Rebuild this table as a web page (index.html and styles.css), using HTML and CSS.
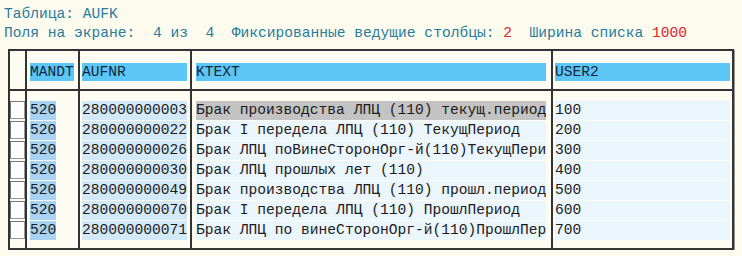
FILE: index.html
```html
<!DOCTYPE html>
<html lang="ru">
<head>
<meta charset="utf-8">
<title>AUFK</title>
<link rel="stylesheet" href="styles.css">
</head>
<body>
<div class="info">
  <div class="line">Таблица: AUFK</div>
  <div class="line">Поля на экране:  4 из  4  Фиксированные ведущие столбцы: <span class="red">2</span>  Ширина списка <span class="red">1000</span></div>
</div>
<div class="frame">
  <div class="col chk">
    <div class="head"></div>
    <div class="body">
      <div class="cb"></div><div class="cb"></div><div class="cb"></div><div class="cb"></div><div class="cb"></div><div class="cb"></div><div class="cb"></div>
    </div>
  </div>
  <div class="col mandt">
    <div class="head"><span class="band">MANDT</span></div>
    <div class="body">
      <div class="cell">520</div><div class="cell">520</div><div class="cell">520</div><div class="cell">520</div><div class="cell">520</div><div class="cell">520</div><div class="cell">520</div>
    </div>
  </div>
  <div class="col aufnr">
    <div class="head"><span class="band">AUFNR</span></div>
    <div class="body">
      <div class="cell">280000000003</div>
      <div class="cell">280000000022</div>
      <div class="cell">280000000026</div>
      <div class="cell">280000000030</div>
      <div class="cell">280000000049</div>
      <div class="cell">280000000070</div>
      <div class="cell">280000000071</div>
    </div>
  </div>
  <div class="col ktext">
    <div class="head"><span class="band">KTEXT</span></div>
    <div class="body">
      <div class="cell sel">Брак производства ЛПЦ (110) текущ.период</div>
      <div class="cell">Брак I передела ЛПЦ (110) ТекущПериод</div>
      <div class="cell">Брак ЛПЦ поВинеСторонОрг-й(110)ТекущПери</div>
      <div class="cell">Брак ЛПЦ прошлых лет (110)</div>
      <div class="cell">Брак производства ЛПЦ (110) прошл.период</div>
      <div class="cell">Брак I передела ЛПЦ (110) ПрошлПериод</div>
      <div class="cell">Брак ЛПЦ по винеСторонОрг-й(110)ПрошлПер</div>
    </div>
  </div>
  <div class="col user2">
    <div class="head"><span class="band">USER2</span></div>
    <div class="body">
      <div class="cell">100</div><div class="cell">200</div><div class="cell">300</div><div class="cell">400</div><div class="cell">500</div><div class="cell">600</div><div class="cell">700</div>
    </div>
  </div>
</div>
</body>
</html>
```

FILE: styles.css
```css
html, body {
  margin: 0;
  background: #fcfbee;
}
body {
  padding: 5px 4px 0 4px;
  font-family: "Liberation Mono", "DejaVu Sans Mono", monospace;
  font-size: 14.6px;
  color: #1c1c1c;
}
.info {
  color: #2a7c9c;
  line-height: 19px;
}
.line {
  white-space: pre;
  height: 19px;
}
.red {
  color: #e5222b;
}
.frame {
  margin: 6px 0 0 4px;
  width: 722px;
  display: flex;
  border: 2px solid #333;
  box-shadow: 1px 1px 0 #999;
  background: #fdfcf2;
}
.col {
  display: flex;
  flex-direction: column;
  border-left: 2px solid #333;
}
.col.chk {
  border-left: none;
  width: 15px;
}
.col.mandt { width: 51px; }
.col.aufnr { width: 110px; }
.col.ktext { width: 359px; }
.col.user2 { width: 179px; }
.head {
  height: 40px;
  box-sizing: border-box;
  padding-top: 12px;
  border-bottom: 2px solid #333;
}
.band {
  display: block;
  height: 18px;
  line-height: 18px;
  background: #5cc6f6;
  color: #15263a;
}
.body {
  padding: 10px 0 7px 0;
}
.cell {
  height: 19px;
  line-height: 19px;
  margin-bottom: 1px;
  white-space: pre;
  overflow: hidden;
}
.cb {
  box-sizing: border-box;
  width: 15px;
  height: 18px;
  margin-bottom: 2px;
  background: #ffffff;
  border: 1px solid #9a9a9a;
  border-left-color: #777;
  border-top-color: #777;
}
.mandt .band, .mandt .cell { margin-left: 3px; }
.mandt .band { width: 5ch; }
.mandt .cell { width: 3ch; background: #a8d3f2; }
.aufnr .band, .aufnr .cell { margin-left: 2px; width: 12ch; }
.aufnr .cell { background: #d4e9f8; }
.ktext .band, .ktext .cell { margin-left: 4px; width: 40ch; }
.ktext .cell { background: #ebf5fc; }
.ktext .cell.sel { background: #c3c3c3; }
.user2 .band, .user2 .cell { margin-left: 2px; width: 20ch; }
.user2 .cell { background: #ebf5fc; }
```
